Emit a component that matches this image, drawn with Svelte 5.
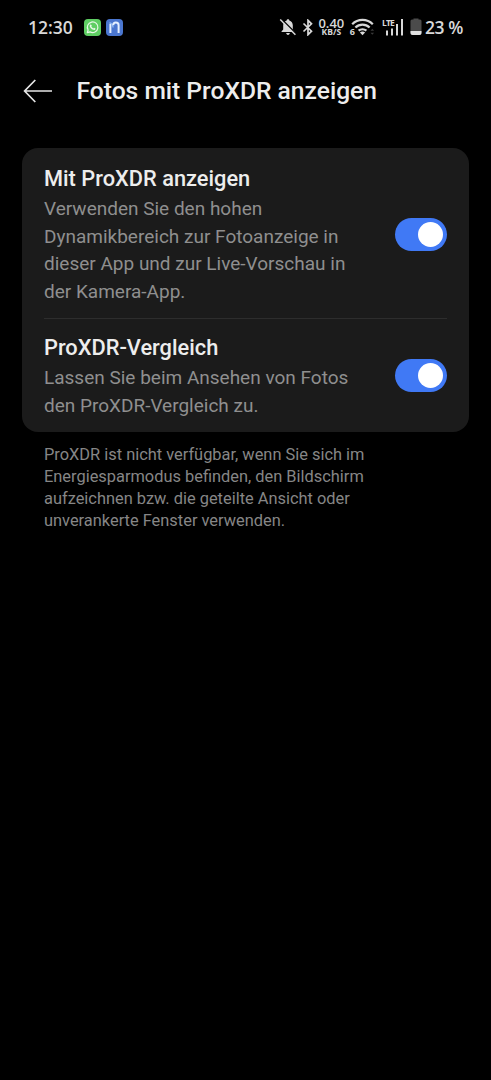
<script lang="ts">
  let settings = [
    {
      title: 'Mit ProXDR anzeigen',
      lines: [
        'Verwenden Sie den hohen',
        'Dynamikbereich zur Fotoanzeige in',
        'dieser App und zur Live-Vorschau in',
        'der Kamera-App.'
      ],
      enabled: true
    },
    {
      title: 'ProXDR-Vergleich',
      lines: ['Lassen Sie beim Ansehen von Fotos', 'den ProXDR-Vergleich zu.'],
      enabled: true
    }
  ];

  const note = [
    'ProXDR ist nicht verfügbar, wenn Sie sich im',
    'Energiesparmodus befinden, den Bildschirm',
    'aufzeichnen bzw. die geteilte Ansicht oder',
    'unverankerte Fenster verwenden.'
  ];
</script>

<div class="screen">
  <div class="status-bar">
    <span class="clock">12:30</span>
    <svg class="app-icon" viewBox="0 0 17 17">
      <rect width="17" height="17" rx="4" fill="#5fce63" />
      <path d="M3.3 13.7l.8-2.7a5.3 5.3 0 1 1 2 1.9z" fill="none" stroke="#e9f8e8" stroke-width="1.2" stroke-linejoin="round" />
      <path d="M6.2 5.8c.5-.6 1-.4 1.2.1l.4.9-.5.8c.5.9 1.1 1.4 2 1.8l.7-.7 1.5.7c-.1 1.3-1.1 1.7-2.1 1.4-2-.6-3.4-2-3.7-3.5 0-.6.1-1.1.5-1.5z" fill="#e9f8e8" />
    </svg>
    <svg class="app-icon second" viewBox="0 0 17 17">
      <rect width="17" height="17" rx="4" fill="#4a76cf" />
      <path d="M4.400 14V4.800" fill="none" stroke="#e4efff" stroke-width="2" />
      <path d="M3.400 3.800C6 3.600 6.300 6 7.300 8.500" fill="none" stroke="#8db8f2" stroke-width="1.300" />
      <path d="M7.200 6.300a2.700 2.700 0 0 1 5.400 0V14" fill="none" stroke="#e4efff" stroke-width="2" />
    </svg>

    <div class="indicators">
      <svg class="bell" viewBox="0 0 18 18">
        <path d="M9 1.200c.8 0 1.300.5 1.300 1.200 2.200.6 3.500 2.500 3.500 4.800v4.400l1.700 1.800v.7h-13v-.7l1.700-1.800V7.200c0-2.300 1.300-4.200 3.500-4.800 0-.7.5-1.200 1.300-1.200zM7.200 15h3.600c0 1.100-.8 1.900-1.800 1.900S7.200 16.100 7.200 15z" fill="#d8d8d8" />
        <path d="M2.200 .8L17.200 15.800" stroke="#000" stroke-width="1.600" />
        <path d="M1.200 1.500L16.400 16.700" stroke="#d8d8d8" stroke-width="1.500" />
      </svg>
      <svg class="bluetooth" viewBox="0 0 12 17">
        <path d="M1.500 4.500l8 7.700L6 15.700V1.300l3.500 3.500-8 7.700" fill="none" stroke="#d8d8d8" stroke-width="1.700" />
      </svg>
      <div class="speed">
        <span class="rate">0.40</span>
        <span class="unit">KB/S</span>
      </div>
      <div class="wifi">
        <span>6</span>
        <svg viewBox="0 0 24 18">
          <g fill="none" stroke="#d8d8d8" stroke-width="2.200">
            <path d="M1.200 6.200a14.500 14.500 0 0 1 20.600 0" />
            <path d="M4.400 9.500a10.200 10.200 0 0 1 14.200 0" />
            <path d="M7.600 12.700a5.900 5.900 0 0 1 7.800 0" />
          </g>
          <path d="M8.900 14.600a3.900 3.900 0 0 1 5.200 0L11.500 17.300z" fill="#d8d8d8" />
          <path d="M19.500 12.700h3.600l-1.800-2zM19.500 14.700h3.600l-1.800 2z" fill="#3a3a3a" />
        </svg>
      </div>
      <div class="signal">
        <span>LTE</span>
        <svg viewBox="0 0 23 18">
          <path d="M6 12.500v5M11 10.500v7M16 6v11.500M21 1v16.500" stroke="#d8d8d8" stroke-width="2" />
        </svg>
      </div>
      <svg class="battery" viewBox="0 0 12 18">
        <path d="M3.500 1.500V.5h5v1H10a1.500 1.500 0 0 1 1.500 1.500v12a2 2 0 0 1-2 2h-7a2 2 0 0 1-2-2V3A1.500 1.500 0 0 1 2 1.500z" fill="#4b4b4b" />
        <path d="M.5 13h11v2a2 2 0 0 1-2 2h-7a2 2 0 0 1-2-2z" fill="#e2e2e2" />
      </svg>
      <span class="percent">23 %</span>
    </div>
  </div>

  <header>
    <button class="back" type="button" aria-label="Zurück">
      <svg viewBox="0 0 30 24">
        <path d="M12.300 1L1.600 12l10.700 11M1.600 12H29" fill="none" stroke="#e6e6e6" stroke-width="1.700" />
      </svg>
    </button>
    <h1>Fotos mit ProXDR anzeigen</h1>
  </header>

  <main>
    <div class="card">
      {#each settings as setting}
        <div class="setting">
          <div class="text">
            <h2>{setting.title}</h2>
            <p>
              {#each setting.lines as line}
                <span>{line}</span>
              {/each}
            </p>
          </div>
          <button
            class="toggle"
            class:on={setting.enabled}
            type="button"
            role="switch"
            aria-checked={setting.enabled}
            aria-label={setting.title}
            on:click={() => (setting.enabled = !setting.enabled)}
          >
            <span class="knob"></span>
          </button>
        </div>
      {/each}
    </div>
    <p class="note">
      {#each note as line}
        <span>{line}</span>
      {/each}
    </p>
  </main>
</div>

<style>
  :global(body) {
    background: #000;
  }

  .screen {
    box-sizing: border-box;
    height: 1080px;
    overflow: hidden;
    background: #000;
    color: #ededed;
    font-family: Roboto, 'Liberation Sans', sans-serif;
  }

  h1, h2, p {
    margin: 0;
    white-space: nowrap;
  }

  svg {
    display: block;
    flex: none;
  }

  button {
    padding: 0;
    border: none;
    background: none;
    cursor: pointer;
  }

  .status-bar {
    box-sizing: border-box;
    display: flex;
    align-items: center;
    height: 54px;
    padding: 0 28px;
    color: #d8d8d8;
    font-family: 'Open Sans', sans-serif;
    font-weight: 600;
  }

  .clock {
    width: 56px;
    font-size: 17.5px;
    line-height: 24px;
  }

  .app-icon {
    width: 17px;
    height: 17px;
  }

  .second {
    margin-left: 5px;
  }

  .indicators {
    display: flex;
    align-items: center;
    width: 184px;
    margin-left: auto;
  }

  .bell {
    width: 18px;
    height: 18px;
  }

  .bluetooth {
    width: 12px;
    height: 17px;
    margin-left: 5px;
  }

  .speed {
    display: flex;
    flex-direction: column;
    align-items: center;
    width: 27px;
    margin-left: 4px;
  }

  .rate {
    height: 10px;
    font-size: 13px;
    line-height: 10px;
  }

  .unit {
    height: 8px;
    font-size: 8.5px;
    font-weight: 700;
    line-height: 8px;
  }

  .wifi {
    display: flex;
    align-items: flex-end;
    margin-left: 5px;
    font-size: 9px;
    font-weight: 700;
    line-height: 9px;
  }

  .wifi svg {
    width: 24px;
    height: 18px;
    margin-left: -4px;
  }

  .signal {
    position: relative;
    margin-left: 6px;
  }

  .signal svg {
    width: 23px;
    height: 18px;
  }

  .signal span {
    position: absolute;
    top: 1px;
    left: 1px;
    font-size: 8.5px;
    font-weight: 700;
    line-height: 8px;
    letter-spacing: -0.8px;
  }

  .battery {
    width: 12px;
    height: 18px;
    margin-left: 6px;
  }

  .percent {
    margin-left: 3px;
    font-size: 17.5px;
    line-height: 24px;
    letter-spacing: -0.4px;
    white-space: nowrap;
  }

  header {
    display: flex;
    align-items: center;
    height: 73px;
    padding-left: 23px;
  }

  .back svg {
    width: 30px;
    height: 24px;
  }

  h1 {
    margin-left: 23.5px;
    font-size: 24.6px;
    font-weight: 500;
    line-height: 32px;
  }

  main {
    padding: 21px 22px 0;
  }

  .card {
    padding: 0 22px;
    border-radius: 16px;
    background: #1b1b1b;
  }

  .setting {
    display: flex;
    align-items: center;
    justify-content: space-between;
    padding: 15px 0 13px;
  }

  .setting + .setting {
    padding: 13px 0;
    border-top: 1px solid #2d2d2d;
  }

  h2 {
    padding-bottom: 1px;
    font-size: 21.8px;
    font-weight: 500;
    line-height: 31px;
  }

  p span {
    display: block;
  }

  .text p {
    color: #8f8f8f;
    font-size: 19px;
    line-height: 27.5px;
  }

  .toggle {
    display: flex;
    flex: none;
    box-sizing: border-box;
    width: 52px;
    height: 33px;
    padding: 4px;
    border-radius: 17px;
    background: #444;
  }

  .toggle.on {
    justify-content: flex-end;
    background: #4079f5;
  }

  .knob {
    width: 25px;
    height: 25px;
    border-radius: 50%;
    background: #fff;
  }

  .note {
    padding: 12px 22px 0;
    color: #868686;
    font-size: 16.4px;
    line-height: 22px;
  }
</style>
